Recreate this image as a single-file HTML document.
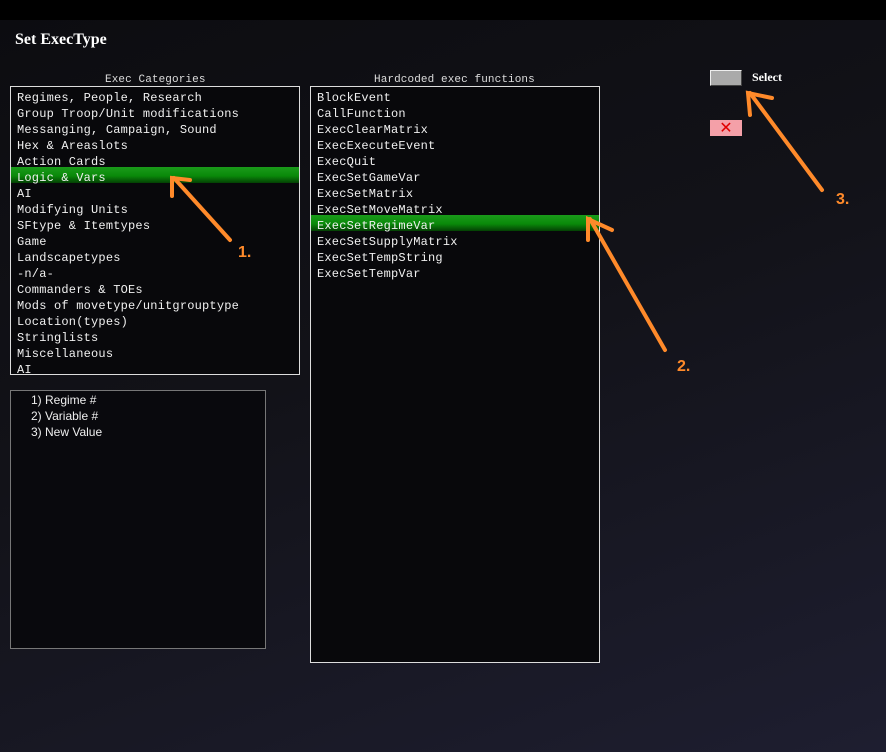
<!DOCTYPE html>
<html><head><meta charset="utf-8"><style>
*{margin:0;padding:0;box-sizing:border-box}
body{width:886px;height:752px;overflow:hidden;position:relative;background:linear-gradient(160deg,#0c0c10 0%,#121218 45%,#1e1e30 100%);font-family:"Liberation Mono",monospace;color:#eee}
.top{position:absolute;left:0;top:0;width:886px;height:20px;background:#000}
.title{position:absolute;left:15px;top:31px;font:bold 16px "Liberation Serif",serif;color:#fff}
.cap{position:absolute;font-size:11px;letter-spacing:0.1px;color:#ddd;top:74px}
.box{position:absolute;background:#08080b;border:1px solid #ddd;overflow:hidden}
.box div{height:16px;line-height:22px;font-size:12px;letter-spacing:0.2px;padding-left:6px;color:#f0f0f0;white-space:pre}
.sel{background:linear-gradient(#1a9a1a,#0a8a0a 55%,#044004)}
.info{position:absolute;left:10px;top:390px;width:256px;height:259px;border:1px solid #777;background:#09090d;font:12px "Liberation Sans",sans-serif;color:#eee;padding:1px 0 0 20px;line-height:16px}
.btn{position:absolute;left:710px;top:70px;width:32px;height:16px;background:#aaa;border:1px solid;border-color:#eee #444 #444 #eee}
.lbl{position:absolute;left:752px;top:70px;font:bold 12px "Liberation Serif",serif;color:#fff}
.x{position:absolute;left:710px;top:120px;width:32px;height:16px;background:#f4a0a8;color:#e00000;font:16px "DejaVu Sans",sans-serif;text-align:center;line-height:16px}
svg{position:absolute;left:0;top:0}
</style></head><body>
<div class="top"></div>
<div class="title">Set ExecType</div>
<div class="cap" style="left:105px">Exec Categories</div>
<div class="cap" style="left:374px">Hardcoded exec functions</div>
<div class="box" style="left:10px;top:86px;width:290px;height:289px">
<div>Regimes, People, Research</div><div>Group Troop/Unit modifications</div><div>Messanging, Campaign, Sound</div><div>Hex &amp; Areaslots</div><div>Action Cards</div><div class="sel">Logic &amp; Vars</div><div>AI</div><div>Modifying Units</div><div>SFtype &amp; Itemtypes</div><div>Game</div><div>Landscapetypes</div><div>-n/a-</div><div>Commanders &amp; TOEs</div><div>Mods of movetype/unitgrouptype</div><div>Location(types)</div><div>Stringlists</div><div>Miscellaneous</div><div>AI</div>
</div>
<div class="box" style="left:310px;top:86px;width:290px;height:577px">
<div>BlockEvent</div><div>CallFunction</div><div>ExecClearMatrix</div><div>ExecExecuteEvent</div><div>ExecQuit</div><div>ExecSetGameVar</div><div>ExecSetMatrix</div><div>ExecSetMoveMatrix</div><div class="sel">ExecSetRegimeVar</div><div>ExecSetSupplyMatrix</div><div>ExecSetTempString</div><div>ExecSetTempVar</div>
</div>
<div class="info">1) Regime #<br>2) Variable #<br>3) New Value</div>
<div class="btn"></div><div class="lbl">Select</div>
<div class="x">✕</div>
<svg width="886" height="752">
<g stroke="#ff8a2a" stroke-width="4" stroke-linecap="round" fill="none">
<line x1="230" y1="240" x2="174" y2="178"/><polyline points="172,196 172,178 190,180"/>
<line x1="665" y1="350" x2="590" y2="219"/><polyline points="588,240 588,219 612,230"/>
<line x1="822" y1="190" x2="750" y2="93"/><polyline points="750,115 748,93 772,98"/>
</g>
<g fill="#ff8a2a" font-family="Liberation Sans,sans-serif" font-weight="bold" font-size="16">
<text x="238" y="257">1.</text><text x="677" y="371">2.</text><text x="836" y="204">3.</text>
</g>
</svg>
</body></html>
